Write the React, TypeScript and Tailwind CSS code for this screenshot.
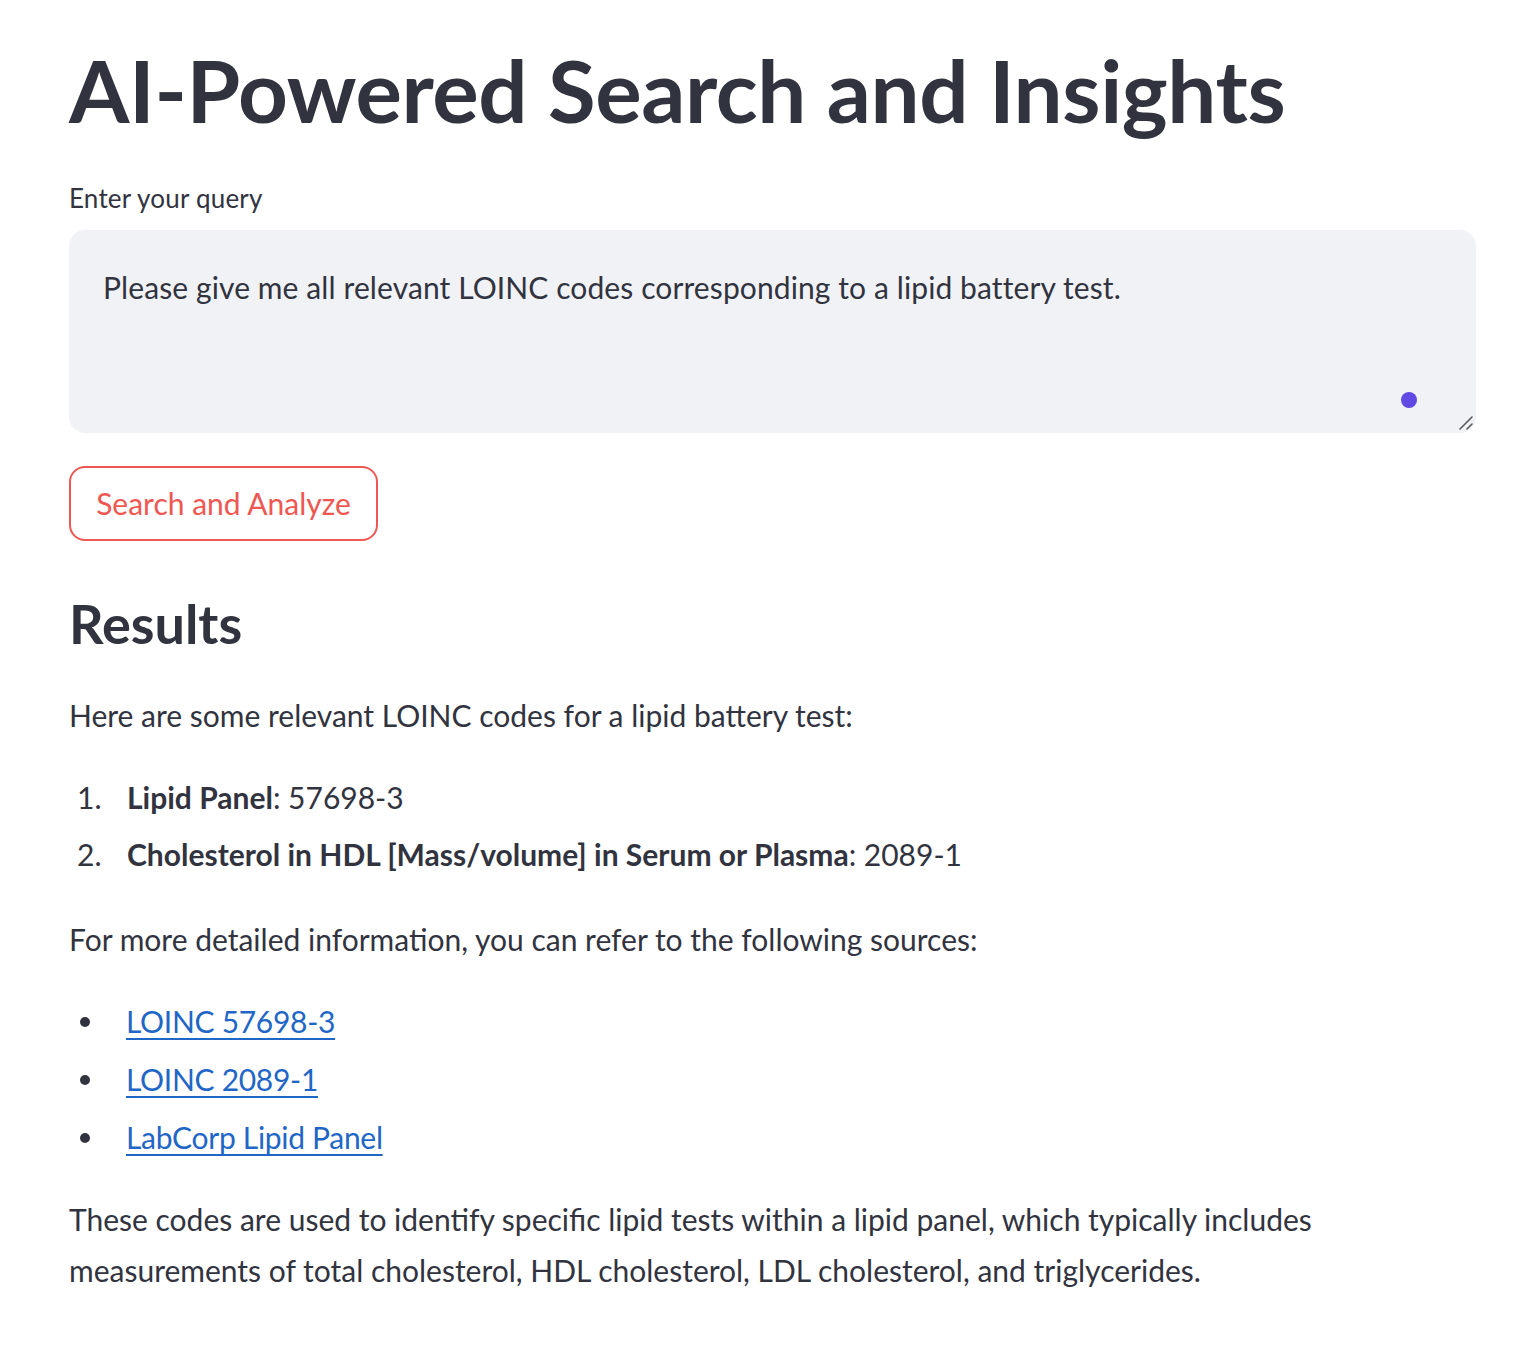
const sans = { fontFamily: 'Lato, "Liberation Sans", sans-serif' }

function Bullet({ children }: { children: React.ReactNode }) {
  return (
    <li className="flex items-center h-[51px]">
      <span className="w-[57px] flex pl-[11px]">
        <span className="block w-[10px] h-[10px] rounded-full bg-[#31333f]" />
      </span>
      {children}
    </li>
  )
}

function Link({ children }: { children: React.ReactNode }) {
  return (
    <a href="#" className="text-[#1f66c6] underline decoration-2 underline-offset-[5px] tracking-[-0.3px]">
      {children}
    </a>
  )
}

export default function App() {
  return (
    <div style={sans} className="min-h-[1346px] bg-white text-[#31333f] pl-[69px] pr-[50px] pt-[38px] antialiased">
      <h1 className="text-[87px] leading-[103px] font-bold tracking-[-0.4px] text-[#31333f]">
        AI-Powered Search and Insights
      </h1>

      <label className="block mt-[39px] text-[26px] leading-[36px] tracking-[0.2px]">Enter your query</label>

      <div className="relative mt-[14px]">
        <textarea
          defaultValue="Please give me all relevant LOINC codes corresponding to a lipid battery test."
          className="block w-full h-[203px] bg-[#f0f2f6] rounded-[16px] pl-[34px] pr-[35px] pt-[33px] text-[30px] leading-[48px] text-[#31333f] outline-none resize-none tracking-[0.1px]"
          style={sans}
        />
        {/* extension badge sitting over the field */}
        <span className="absolute right-[59px] bottom-[25px] w-[16px] h-[16px] rounded-full bg-[#6149e3]" />
        <svg className="absolute right-[2px] bottom-[2px]" width="16" height="16" viewBox="0 0 16 16">
          <path d="M2 14 L14 2 M9 14 L14 9" stroke="#5a5a5a" strokeWidth="1.6" strokeLinecap="round" fill="none" />
        </svg>
      </div>

      <button
        style={sans}
        className="mt-[33px] w-[309px] h-[75px] rounded-[16px] border-2 border-[#ef5752] text-[#ef5752] text-[30px] bg-white"
      >
        Search and Analyze
      </button>

      <h3 className="mt-[49px] text-[54px] leading-[67px] font-bold">Results</h3>

      <p className="mt-[33px] text-[30px] leading-[51px]">Here are some relevant LOINC codes for a lipid battery test:</p>

      <ol className="mt-[31px] text-[30px] leading-[51px] flex flex-col gap-[6px]">
        <li className="flex">
          <span className="w-[58px] pl-[8px]">1.</span>
          <span>
            <b>Lipid Panel</b>: 57698-3
          </span>
        </li>
        <li className="flex">
          <span className="w-[58px] pl-[8px]">2.</span>
          <span>
            <b>Cholesterol in HDL [Mass/volume] in Serum or Plasma</b>: 2089-1
          </span>
        </li>
      </ol>

      <p className="mt-[34px] text-[30px] leading-[51px]">For more detailed information, you can refer to the following sources:</p>

      <ul className="mt-[31px] text-[30px] leading-[51px] flex flex-col gap-[7px]">
        <Bullet>
          <Link>LOINC 57698-3</Link>
        </Bullet>
        <Bullet>
          <Link>LOINC 2089-1</Link>
        </Bullet>
        <Bullet>
          <Link>LabCorp Lipid Panel</Link>
        </Bullet>
      </ul>

      <p className="mt-[31px] text-[30px] leading-[51px] max-w-[1300px]">
        These codes are used to identify specific lipid tests within a lipid panel, which typically includes measurements of total cholesterol, HDL cholesterol, LDL cholesterol, and triglycerides.
      </p>
    </div>
  )
}
